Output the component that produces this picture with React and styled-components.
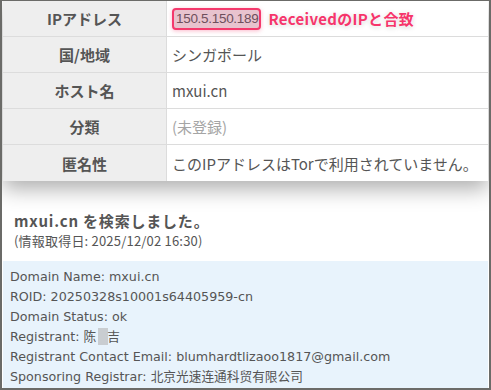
import React from "react";
import styled, { createGlobalStyle } from "styled-components";

const GlobalStyle = createGlobalStyle`
	html, body {
		margin: 0;
		padding: 0;
		background: #fff;
	}
	* {
		box-sizing: border-box;
	}
`;

const Frame = styled.div`
	width: 491px;
	height: 390px;
	overflow: hidden;
	border: 2px solid #6b6b68;
	border-top-width: 1px;
	padding: 0 1px;
	background: #fff;
	font-family: "Noto Sans CJK JP", "Liberation Sans", sans-serif;
	color: #555;
	display: flex;
	flex-direction: column;
`;

const InfoTable = styled.div`
	display: grid;
	grid-template-columns: 164px 1fr;
	background: #fff;
	box-shadow: 0 8px 20px rgba(0, 0, 0, 0.32);
	position: relative;
	z-index: 1;
`;

const Label = styled.div`
	height: 36px;
	background: #eeeeee;
	border-bottom: ${(p) => (p.$last ? "none" : "1px solid #dcdcdc")};
	border-right: 1px solid #dcdcdc;
	display: flex;
	align-items: center;
	justify-content: center;
	font-weight: bold;
	font-size: 15px;
	color: #555;
`;

const Value = styled.div`
	height: 36px;
	border-bottom: ${(p) => (p.$last ? "none" : "1px solid #dcdcdc")};
	display: flex;
	align-items: center;
	gap: 7px;
	padding-left: 5px;
	font-size: 15px;
	color: ${(p) => (p.$muted ? "#a5a5a5" : "#555")};
	white-space: nowrap;
`;

const IpBadge = styled.span`
	display: inline-flex;
	align-items: center;
	height: 22px;
	padding: 0 1px 0 2px;
	background: #e8c3ce;
	border: 2px solid #f4396c;
	border-radius: 4px;
	box-shadow: 0 1px 4px rgba(244, 57, 108, 0.35);
	font-family: "Liberation Sans", Arial, sans-serif;
	font-size: 13.5px;
	letter-spacing: -0.3px;
	color: #6e4f5c;
`;

const Note = styled.span`
	font-weight: bold;
	font-size: 15px;
	letter-spacing: 0.3px;
	color: #f6356b;
	text-shadow: 0 0 3px #fff, 0 1px 5px rgba(0, 0, 0, 0.2);
`;

const Search = styled.div`
	padding: 30px 11px 10px;
`;

const SearchTitle = styled.div`
	font-weight: bold;
	font-size: 15px;
	letter-spacing: 0.8px;
	line-height: 20px;
	color: #555;
`;

const SearchDate = styled.div`
	font-size: 13px;
	letter-spacing: 0.2px;
	line-height: 20px;
	color: #555;
`;

const Whois = styled.div`
	flex: 1;
	background: #e8f3fc;
	padding: 6px 7px 0;
	font-family: "DejaVu Sans", Verdana, "Noto Sans CJK SC", sans-serif;
	font-size: 12.7px;
	line-height: 20px;
	color: #555;
`;

const Line = styled.div`
	white-space: nowrap;
`;

const Redacted = styled.span`
	display: inline-block;
	width: 10px;
	height: 17px;
	vertical-align: -4px;
	background: #c9cdd1;
	margin: 0 -1px 0 2px;
`;

const rows = [
	{
		label: "IPアドレス",
		value: (
			<>
				<IpBadge>150.5.150.189</IpBadge>
				<Note>ReceivedのIPと合致</Note>
			</>
		),
	},
	{ label: "国/地域", value: "シンガポール" },
	{ label: "ホスト名", value: "mxui.cn" },
	{ label: "分類", value: "(未登録)", muted: true },
	{ label: "匿名性", value: "このIPアドレスはTorで利用されていません。" },
];

export default function App() {
	return (
		<>
			<GlobalStyle />
			<Frame>
				<InfoTable>
					{rows.map((row, i) => (
						<React.Fragment key={row.label}>
							<Label $last={i === rows.length - 1}>{row.label}</Label>
							<Value $last={i === rows.length - 1} $muted={row.muted}>
								{row.value}
							</Value>
						</React.Fragment>
					))}
				</InfoTable>
				<Search>
					<SearchTitle>mxui.cn を検索しました。</SearchTitle>
					<SearchDate>(情報取得日: 2025/12/02 16:30)</SearchDate>
				</Search>
				<Whois>
					<Line>Domain Name: mxui.cn</Line>
					<Line>ROID: 20250328s10001s64405959-cn</Line>
					<Line>Domain Status: ok</Line>
					<Line>
						Registrant: 陈<Redacted />吉
					</Line>
					<Line>Registrant Contact Email: blumhardtlizaoo1817@gmail.com</Line>
					<Line>Sponsoring Registrar: 北京光速连通科贸有限公司</Line>
				</Whois>
			</Frame>
		</>
	);
}
